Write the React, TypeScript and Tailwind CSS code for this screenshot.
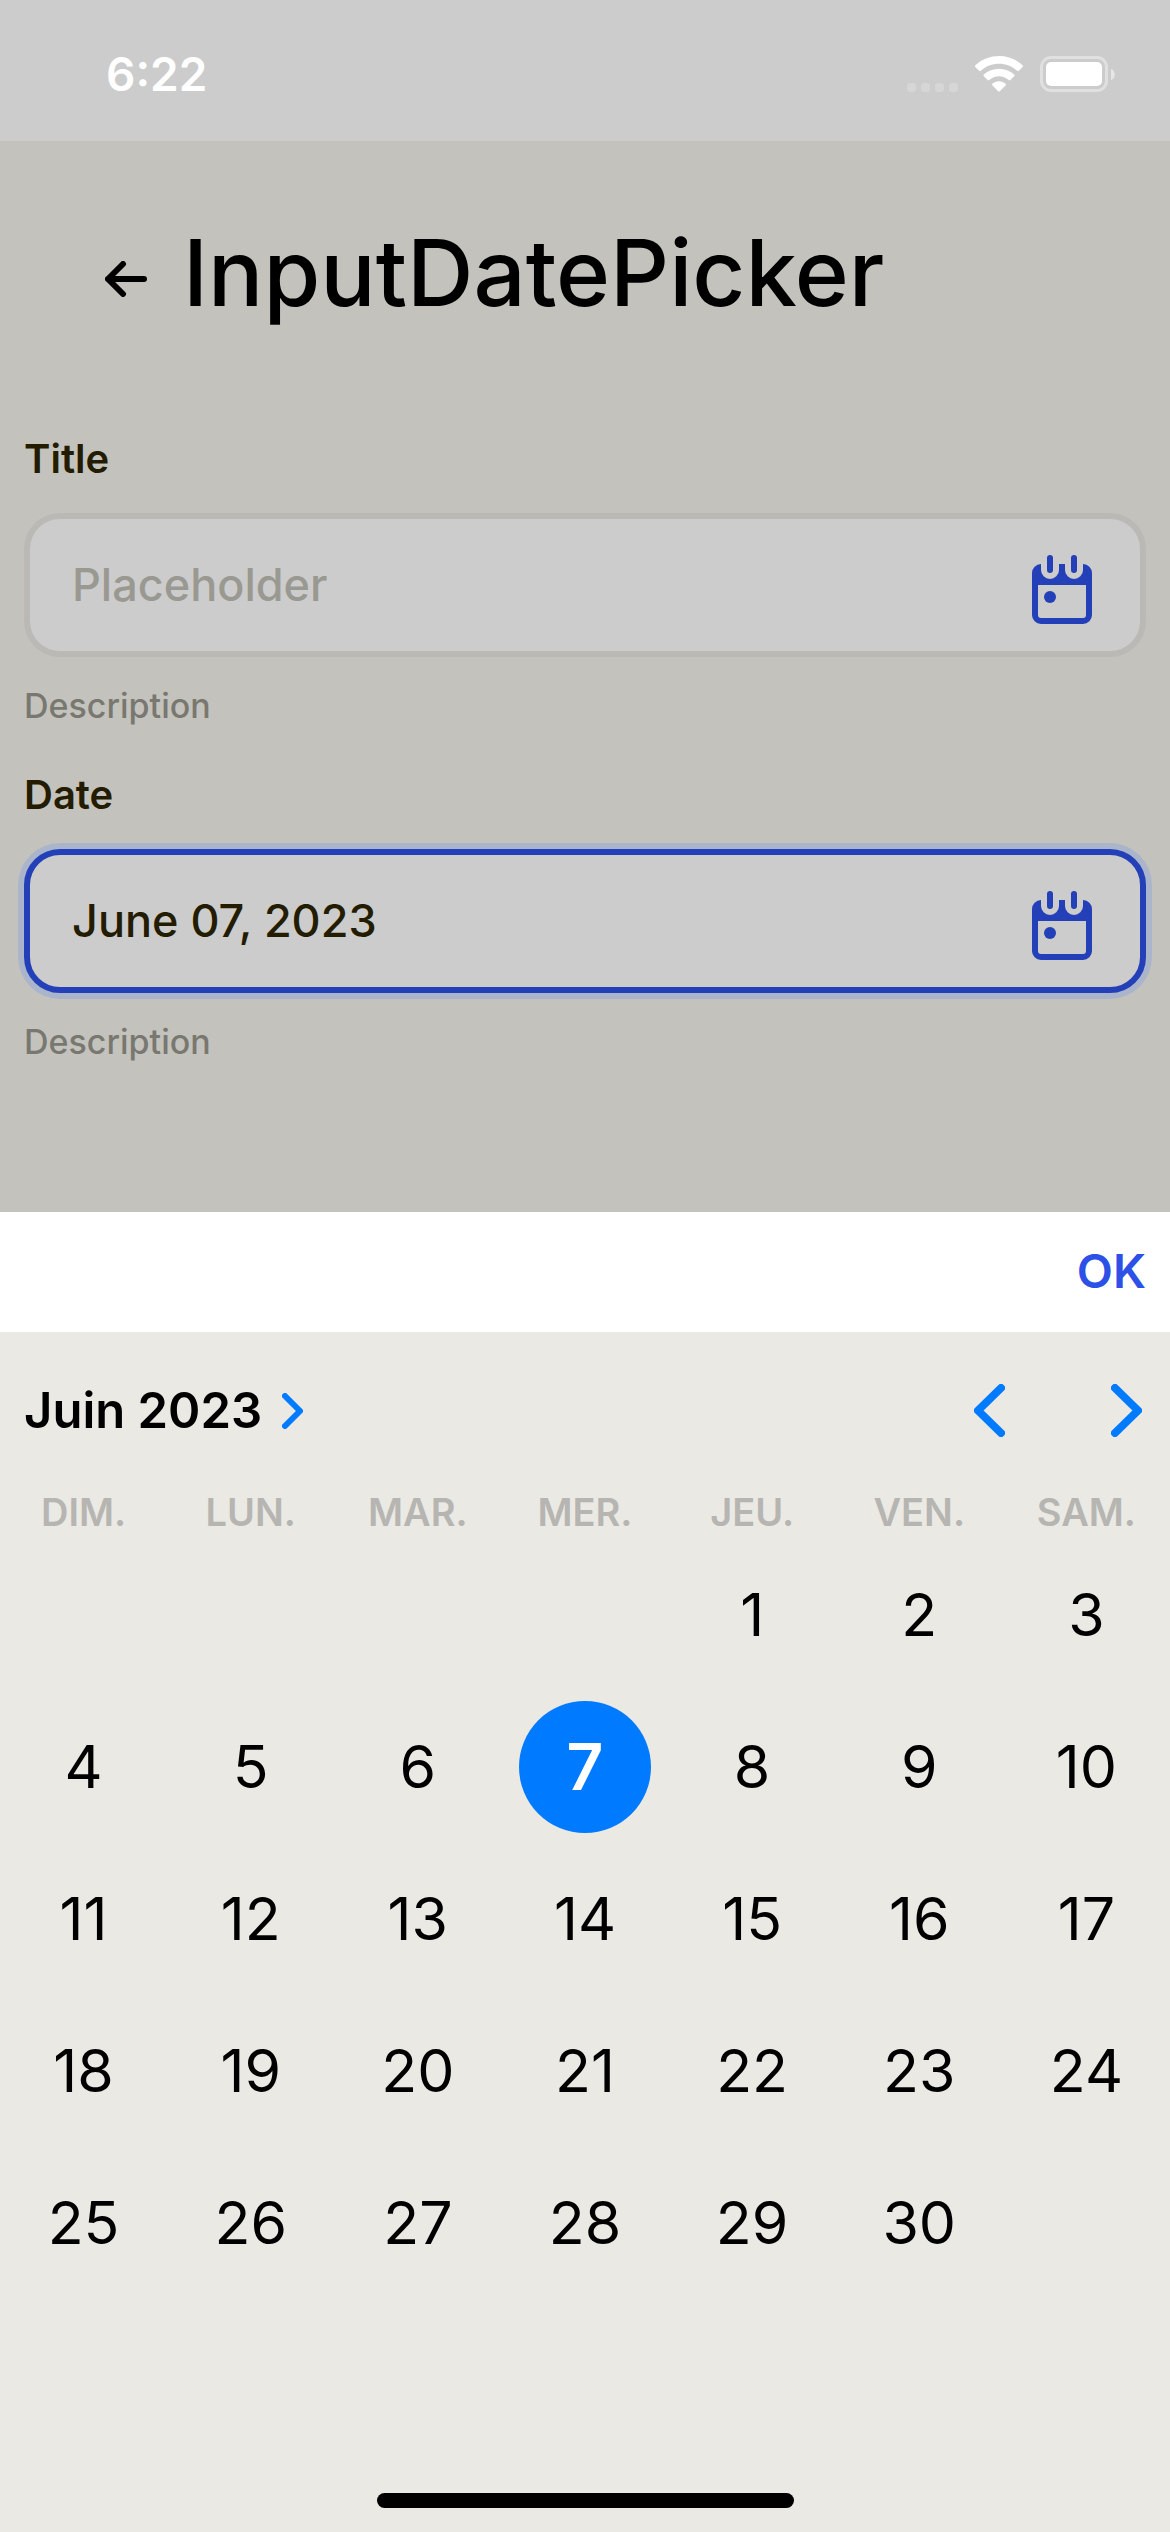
import { useState } from "react";

const WEEKDAYS = ["DIM.", "LUN.", "MAR.", "MER.", "JEU.", "VEN.", "SAM."];

const WEEKS: (number | null)[][] = [
  [null, null, null, null, 1, 2, 3],
  [4, 5, 6, 7, 8, 9, 10],
  [11, 12, 13, 14, 15, 16, 17],
  [18, 19, 20, 21, 22, 23, 24],
  [25, 26, 27, 28, 29, 30, null],
];

function StatusBar() {
  return (
    <div className="flex h-[141px] shrink-0 items-center justify-between bg-[#cccccc] pr-[55px] pl-[106px] pt-[7px] text-white">
      <span className="text-[46px] leading-none font-semibold">6:22</span>
      <div className="flex items-center">
        <div className="mt-[27px] flex gap-[5px]">
          {[0, 1, 2, 3].map((i) => (
            <span key={i} className="size-[9px] rounded-[3px] bg-white/20" />
          ))}
        </div>
        <svg className="ml-[17px] h-9 w-12" viewBox="0 0 48 36" fill="currentColor" aria-hidden="true">
          <path d="M24 0C33 0 41.500 3.400 47.600 9.300C48.100 9.800 48.100 10.400 47.700 10.900L43.800 14.800C43.300 15.300 42.700 15.300 42.200 14.800C37.200 10.200 30.800 7.700 24 7.700S10.800 10.200 5.800 14.800C5.300 15.300 4.700 15.300 4.200 14.800L.3 10.900C-.1 10.400-.1 9.800.4 9.300C6.500 3.400 15 0 24 0Z" />
          <path d="M24 12.700C29.700 12.700 35 14.800 39.200 18.600C39.700 19.100 39.700 19.700 39.200 20.200L35.400 24C34.900 24.500 34.300 24.500 33.700 24C31 21.700 27.600 20.300 24 20.300S17 21.700 14.300 24C13.700 24.500 13.100 24.500 12.600 24L8.800 20.200C8.300 19.700 8.300 19.100 8.800 18.600C13 14.800 18.300 12.700 24 12.700Z" />
          <path d="M24 25.200C26.500 25.200 28.800 26.100 30.600 27.700C31.200 28.200 31.200 28.800 30.700 29.300L24.800 35.300C24.300 35.800 23.700 35.800 23.200 35.300L17.300 29.300C16.800 28.800 16.800 28.200 17.400 27.700C19.200 26.100 21.500 25.200 24 25.200Z" />
        </svg>
        <svg className="ml-[17px] h-9 w-[75px]" viewBox="0 0 75 36" aria-hidden="true">
          <rect x="1.500" y="1.500" width="65" height="33" rx="9.500" fill="none" stroke="white" strokeOpacity=".4" strokeWidth="3" />
          <rect x="6" y="6" width="56" height="24" rx="5" fill="white" />
          <path d="M71 13c5 1.500 5 9.500 0 11Z" fill="white" fillOpacity=".5" />
        </svg>
      </div>
    </div>
  );
}

function CalendarIcon() {
  return (
    <svg className="h-[69px] w-[60px] shrink-0" viewBox="0 0 20 23" fill="currentColor" aria-hidden="true">
      <path
        fillRule="evenodd"
        d="M3 3a3 3 0 0 0-3 3v14a3 3 0 0 0 3 3h14a3 3 0 0 0 3-3V6a3 3 0 0 0-3-3v2a3 3 0 0 1-6 0V3H9v2a3 3 0 0 1-6 0ZM2 10h16v10a1 1 0 0 1-1 1H3a1 1 0 0 1-1-1Z"
      />
      <rect x="5" width="2" height="6" rx="1" />
      <rect x="13" width="2" height="6" rx="1" />
      <circle cx="6" cy="14" r="2" />
    </svg>
  );
}

function DateField(props: { id: string; label: string; value?: string; placeholder?: string; active?: boolean }) {
  const { id, label, value, placeholder, active } = props;
  return (
    <div className="flex flex-col">
      <label htmlFor={id} className="text-[40px] leading-[48px] font-semibold text-[#231c00]">
        {label}
      </label>
      <div
        className={
          active
            ? "mt-[30px] flex h-36 items-center rounded-[36px] border-6 border-[#2340b9] bg-[#cccccc] pr-12 pl-[42px] shadow-[0_0_0_6px_#aab5cc]"
            : "mt-[30px] flex h-36 items-center rounded-[36px] border-6 border-[#bab9b5] bg-[#cccccc] pr-12 pl-[42px]"
        }
      >
        <input
          id={id}
          type="text"
          readOnly
          value={value ?? ""}
          placeholder={placeholder}
          aria-describedby={`${id}-description`}
          className="min-w-0 flex-1 bg-transparent text-[45px] leading-[60px] font-medium text-[#231c00] outline-none placeholder:text-[#999992]"
        />
        <button type="button" aria-label={`Open calendar for ${label}`} className="mt-[9px] text-[#2340b9]">
          <CalendarIcon />
        </button>
      </div>
      <p id={`${id}-description`} className="mt-[27px] text-[34px] leading-[44px] font-medium text-[#787870]">
        Description
      </p>
    </div>
  );
}

function Chevron({ className, d, viewBox, width }: { className: string; d: string; viewBox: string; width: number }) {
  return (
    <svg className={className} viewBox={viewBox} fill="none" stroke="currentColor" strokeWidth={width} strokeLinecap="round" strokeLinejoin="round" aria-hidden="true">
      <path d={d} />
    </svg>
  );
}

export default function App() {
  const [selected, setSelected] = useState(7);

  return (
    <div className="flex min-h-screen flex-col bg-[#c4c2bd] font-['Inter',sans-serif]">
      <StatusBar />

      <main className="flex-1">
        <header className="flex h-[270px] items-center gap-9 pl-[105px]">
          <button type="button" aria-label="Back" className="mt-1.5">
            <svg className="h-9 w-[42px]" viewBox="0 0 42 36" fill="none" stroke="currentColor" strokeWidth="6" strokeLinecap="round" strokeLinejoin="round" aria-hidden="true">
              <path d="M18 3 3 18l15 15M3 18h36" />
            </svg>
          </button>
          <h1 className="pb-1.5 text-[92px] leading-[110px] font-medium">InputDatePicker</h1>
        </header>
        <form className="mt-6 flex flex-col gap-[43px] px-6">
          <DateField id="title" label="Title" placeholder="Placeholder" />
          <DateField id="date" label="Date" value="June 07, 2023" active />
        </form>
      </main>

      <section aria-label="Juin 2023" className="flex flex-col bg-[#eae9e4]">
        <div className="flex h-[120px] items-center justify-end bg-white px-6 pb-1">
          <button type="button" className="text-[47px] leading-none font-semibold text-[#2d50e6]">
            OK
          </button>
        </div>

        <div className="flex h-[153px] items-center justify-between pt-1 pr-7 pl-6">
          <button type="button" className="flex items-center gap-[20px] text-[49px] leading-[60px] font-semibold">
            Juin 2023
            <Chevron className="h-9 w-[21px] text-[#007aff]" viewBox="0 0 21 36" width={6} d="M3 3l15 15L3 33" />
          </button>
          <div className="flex gap-[106px] text-[#007aff]">
            <button type="button" aria-label="Mois précédent">
              <Chevron className="h-[53px] w-[31px]" viewBox="0 0 31 53" width={8} d="M27 4 4 26.500 27 49" />
            </button>
            <button type="button" aria-label="Mois suivant">
              <Chevron className="h-[53px] w-[31px]" viewBox="0 0 31 53" width={8} d="M4 4l23 22.500L4 49" />
            </button>
          </div>
        </div>

        <table className="w-full table-fixed">
          <thead>
            <tr className="h-[54px]">
              {WEEKDAYS.map((day) => (
                <th key={day} scope="col" className="p-0 text-center text-[38px] leading-[46px] font-semibold text-[#b6b5b2]">
                  {day}
                </th>
              ))}
            </tr>
          </thead>
          <tbody>
            {WEEKS.map((week, row) => (
              <tr key={row} className="h-[152px]">
                {week.map((day, col) => (
                  <td key={col} className="p-0">
                    {day !== null && (
                      <button
                        type="button"
                        aria-pressed={day === selected}
                        onClick={() => setSelected(day)}
                        className={
                          day === selected
                            ? "mx-auto flex size-[132px] items-center justify-center rounded-full bg-[#007aff] text-[64px] leading-none font-semibold text-white"
                            : "mx-auto flex size-[132px] items-center justify-center rounded-full pb-0.5 text-[59px] leading-none text-black"
                        }
                      >
                        {day}
                      </button>
                    )}
                  </td>
                ))}
              </tr>
            ))}
          </tbody>
        </table>

        <div className="mx-auto mt-[194px] mb-6 h-[15px] w-[417px] rounded-full bg-black" />
      </section>
    </div>
  );
}
